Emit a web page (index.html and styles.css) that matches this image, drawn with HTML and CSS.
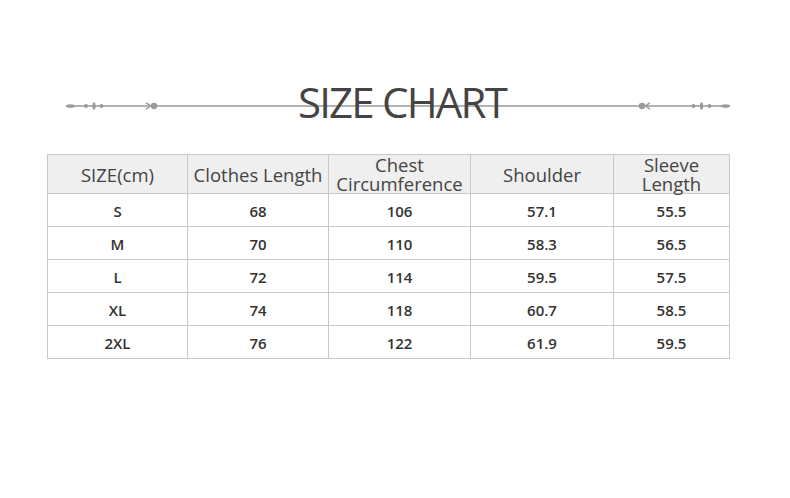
FILE: index.html
```html
<!DOCTYPE html>
<html>
<head>
<meta charset="utf-8">
<link rel="stylesheet" href="styles.css">
</head>
<body>
<div class="page">
  <div class="banner">
    <svg class="ornament" width="790" height="56" viewBox="0 0 790 56">
      <g fill="#9a9a9a" stroke="none">
        <line x1="66" y1="32" x2="730" y2="32" stroke="#9a9a9a" stroke-width="1.4"/>
        <ellipse cx="70.5" cy="32" rx="4.5" ry="1.8"/>
        <circle cx="86" cy="32" r="2.1"/>
        <ellipse cx="94" cy="32" rx="1.6" ry="3.8"/>
        <circle cx="101.5" cy="32" r="2.1"/>
        <path d="M146 29 Q150 31 150 32 Q150 33 146 35" fill="none" stroke="#9a9a9a" stroke-width="1.4"/>
        <circle cx="154" cy="32" r="3.2"/>
        <circle cx="642" cy="32" r="3.2"/>
        <path d="M650 29 Q646 31 646 32 Q646 33 650 35" fill="none" stroke="#9a9a9a" stroke-width="1.4"/>
        <circle cx="693.5" cy="32" r="2.1"/>
        <ellipse cx="701.5" cy="32" rx="1.6" ry="3.8"/>
        <circle cx="709.5" cy="32" r="2.1"/>
        <ellipse cx="725.5" cy="32" rx="4.5" ry="1.8"/>
      </g>
    </svg>
    <h1 class="title">SIZE CHART</h1>
  </div>
  <table class="chart">
    <colgroup>
      <col class="c1"><col class="c2"><col class="c3"><col class="c4"><col class="c5">
    </colgroup>
    <thead>
      <tr>
        <th>SIZE(cm)</th>
        <th>Clothes Length</th>
        <th>Chest<br>Circumference</th>
        <th>Shoulder</th>
        <th>Sleeve<br>Length</th>
      </tr>
    </thead>
    <tbody>
      <tr><td>S</td><td>68</td><td>106</td><td>57.1</td><td>55.5</td></tr>
      <tr><td>M</td><td>70</td><td>110</td><td>58.3</td><td>56.5</td></tr>
      <tr><td>L</td><td>72</td><td>114</td><td>59.5</td><td>57.5</td></tr>
      <tr><td>XL</td><td>74</td><td>118</td><td>60.7</td><td>58.5</td></tr>
      <tr><td>2XL</td><td>76</td><td>122</td><td>61.9</td><td>59.5</td></tr>
    </tbody>
  </table>
</div>
</body>
</html>
```

FILE: styles.css
```css
html, body {
  margin: 0;
  padding: 0;
  background: #ffffff;
}

.page {
  box-sizing: border-box;
  width: 790px;
  height: 498px;
  padding-top: 74px;
  overflow: hidden;
  font-family: "Open Sans", "Noto Sans", sans-serif;
  color: #333;
}

.banner {
  display: grid;
  height: 56px;
}

.ornament,
.title {
  grid-area: 1 / 1;
}

.ornament {
  display: block;
}

.title {
  margin: 0;
  justify-self: center;
  font-size: 42px;
  line-height: 56px;
  font-weight: 400;
  color: #444;
  letter-spacing: -1.8px;
  padding-left: 14px;
}

.chart {
  margin: 24px 0 0 47px;
  border-collapse: collapse;
  table-layout: fixed;
  width: 682px;
}

.c1 { width: 140px; }
.c2 { width: 141px; }
.c3 { width: 142px; }
.c4 { width: 143px; }
.c5 { width: 116px; }

.chart th,
.chart td {
  border: 1px solid #c9c9c9;
  text-align: center;
  padding: 0;
}

.chart th {
  background: #efefef;
  height: 38px;
  font-size: 18.5px;
  line-height: 19px;
  font-weight: 400;
  color: #444;
}

.chart td {
  height: 31px;
  font-size: 15px;
  font-weight: 600;
  color: #333;
  padding-top: 1px;
}
```
